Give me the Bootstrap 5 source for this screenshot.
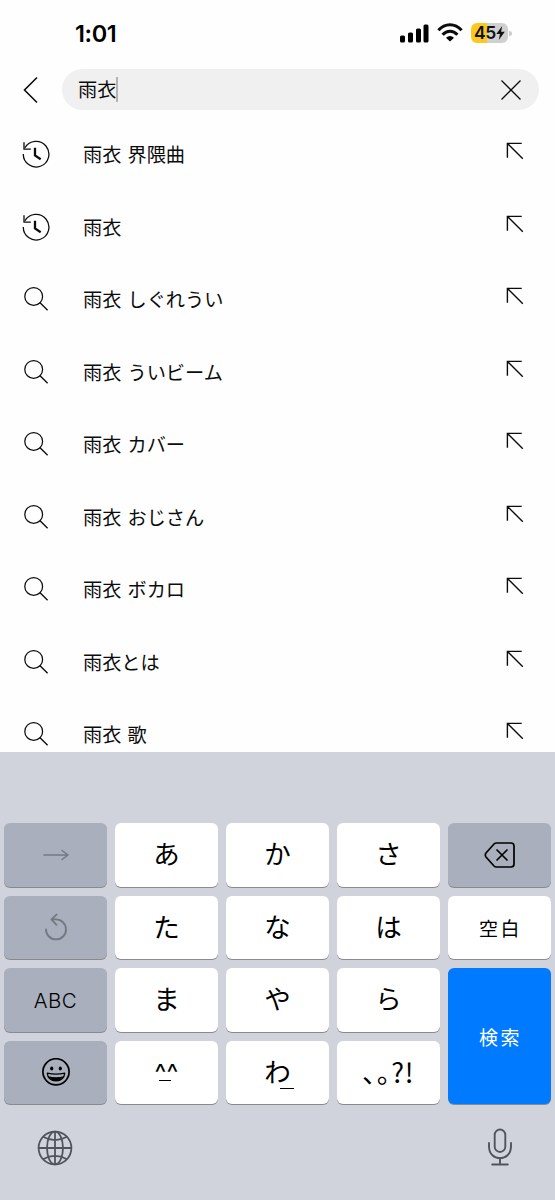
<!DOCTYPE html>
<html lang="ja">
<head>
<meta charset="utf-8">
<meta name="viewport" content="width=device-width, initial-scale=1">
<title>検索</title>
<link href="https://cdn.jsdelivr.net/npm/bootstrap@5.3.0/dist/css/bootstrap.min.css" rel="stylesheet">
<style>
body{font-family:"Noto Sans CJK JP",sans-serif;color:#0c0c0c;background:#fefefe}
svg{display:block;flex:none;fill:none;stroke:currentColor}
.screen{width:555px;height:1200px}
.status{height:69px;padding:0 43px 3px 75px}
.clock{font:600 23.5px/1 Inter,sans-serif;letter-spacing:-.4px;color:#000;padding-top:2px}
.battery{width:37px;height:20px;border-radius:6px;background:linear-gradient(90deg,#fbc91d 16.5px,#d0d0d1 16.5px);font:600 17.5px/20px Inter,sans-serif;letter-spacing:-.3px;color:#111;padding-left:3px}
.battery-tip{width:3px;height:5px;border-radius:0 3px 3px 0;background:#ccc;margin-left:1px}
.search-row{height:41px;padding:0 16px 0 22px}
.field{height:41px;margin-left:22px;padding:0 16px;background:#f0f0f0;font-size:19.2px}
.caret{width:2px;height:25px;background:#b4b4b4}
.suggestions{height:641.5px;padding-top:8.25px}
.suggestion{height:72.5px;padding:0 31px 0 22px;font-size:19.2px;word-spacing:1.8px}
.suggestion svg:first-child{margin:0 33px 1px 0}
.suggestion svg:last-child{margin-bottom:7px}
.keyboard{height:448.5px;background:#d0d3db;padding:71.5px 4px 0;color:#000}
.keys{display:grid;grid-template-columns:repeat(5,103px);grid-auto-rows:63.6px;gap:9px 8px}
.key{background:#fff;border-radius:6px;box-shadow:0 1px 0 #898a8e;font-size:26.5px;line-height:1;padding-bottom:3px}
.key-dark{background:#a9afbc;padding:0}
.key-text{font-size:19px;letter-spacing:2.6px;padding:0 0 0 2px}
.key-go{background:#007aff;color:#fff;grid-column:5;grid-row:3/span 2}
.key-abc{font:300 20.5px/1 Inter,sans-serif;letter-spacing:.5px;padding-top:2px}
.dim{color:#747982}
.key-bar{padding:24px 37px 0 33px;color:#50545c}
.face{font:25px/1 Inter,sans-serif;padding-top:5px;letter-spacing:.3px}
.under{position:absolute;height:1.7px;background:#000}
.under-face{left:44px;top:39px;width:12px}
.under-wa{left:54px;top:47px;width:14px}
.punct{font-size:27px;letter-spacing:.7px}
</style>
</head>
<body>
<svg width="0" height="0" class="position-absolute">
<symbol id="history" viewBox="0 0 28 28"><path d="M1.3 14A12.8 12.8 0 1 0 3 7.8" stroke-width="1.3"/><path d="M2 2.3V9.2H8.8" stroke-width="1.3"/><path d="M13 7.7V15.5L18.7 19.2" stroke-width="2.3"/></symbol>
<symbol id="search" viewBox="0 0 28 28"><circle cx="11.7" cy="11.4" r="8.9" stroke-width="1.25"/><path d="M17.8 17.5 25.6 25.2" stroke-width="1.35"/></symbol>
<symbol id="fill" viewBox="0 0 18 18"><path d="M15.7 1.4H1.4V15.7M1.4 1.4 16.8 16.8" stroke-width="1.4"/></symbol>
</svg>
<main class="screen d-flex flex-column overflow-hidden">
<header class="status d-flex align-items-center">
<div class="clock">1:01</div>
<svg class="ms-auto" width="30" height="20" viewBox="0 0 30 20" style="stroke:none;fill:#000"><rect x="1" y="12.5" width="5" height="7" rx="1.5"/><rect x="9" y="9.5" width="5" height="10" rx="1.5"/><rect x="17" y="5.5" width="5" height="14" rx="1.5"/><rect x="24.5" y="1.5" width="5" height="18" rx="1.5"/></svg>
<svg class="ms-2" width="26" height="20" viewBox="0 0 26 20" stroke-width="3.1"><path d="M1.4 7.3C8-.2 18-.2 24.6 7.3M5.6 11.7C10 7 16 7 20.4 11.7"/><path d="M13 18.6 9 14.7Q13 11.5 17 14.7Z" fill="#000" stroke="none"/></svg>
<div class="battery d-flex align-items-center ms-2"><span>45</span><svg width="9" height="14" viewBox="0 0 9 14"><path d="M6.2 0 .3 8H4L2.8 14 8.8 5.8H5.1Z" fill="#111" stroke="none"/></svg></div><div class="battery-tip"></div>
</header>
<div class="search-row d-flex align-items-center">
<svg width="18" height="28" viewBox="0 0 18 28" stroke-width="1.6"><path d="M15 1.5 2.5 14 15 26.5"/></svg>
<div class="field rounded-pill flex-grow-1 d-flex align-items-center"><span>雨衣</span><i class="caret"></i><svg class="ms-auto" width="24" height="24" viewBox="0 0 24 24" stroke-width="1.3"><path d="M2.5 2.5 21.5 21.5M21.5 2.5 2.5 21.5"/></svg></div>
</div>
<section class="suggestions overflow-hidden flex-shrink-0">
<div class="suggestion d-flex align-items-center"><svg width="28" height="28"><use href="#history"/></svg><span>雨衣 界隈曲</span><svg class="ms-auto" width="18" height="18"><use href="#fill"/></svg></div>
<div class="suggestion d-flex align-items-center"><svg width="28" height="28"><use href="#history"/></svg><span>雨衣</span><svg class="ms-auto" width="18" height="18"><use href="#fill"/></svg></div>
<div class="suggestion d-flex align-items-center"><svg width="28" height="28"><use href="#search"/></svg><span>雨衣 しぐれうい</span><svg class="ms-auto" width="18" height="18"><use href="#fill"/></svg></div>
<div class="suggestion d-flex align-items-center"><svg width="28" height="28"><use href="#search"/></svg><span>雨衣 ういビーム</span><svg class="ms-auto" width="18" height="18"><use href="#fill"/></svg></div>
<div class="suggestion d-flex align-items-center"><svg width="28" height="28"><use href="#search"/></svg><span>雨衣 カバー</span><svg class="ms-auto" width="18" height="18"><use href="#fill"/></svg></div>
<div class="suggestion d-flex align-items-center"><svg width="28" height="28"><use href="#search"/></svg><span>雨衣 おじさん</span><svg class="ms-auto" width="18" height="18"><use href="#fill"/></svg></div>
<div class="suggestion d-flex align-items-center"><svg width="28" height="28"><use href="#search"/></svg><span>雨衣 ボカロ</span><svg class="ms-auto" width="18" height="18"><use href="#fill"/></svg></div>
<div class="suggestion d-flex align-items-center"><svg width="28" height="28"><use href="#search"/></svg><span>雨衣とは</span><svg class="ms-auto" width="18" height="18"><use href="#fill"/></svg></div>
<div class="suggestion d-flex align-items-center"><svg width="28" height="28"><use href="#search"/></svg><span>雨衣 歌</span><svg class="ms-auto" width="18" height="18"><use href="#fill"/></svg></div>
</section>
<section class="keyboard flex-shrink-0">
<div class="keys">
<div class="key key-dark dim d-flex align-items-center justify-content-center"><svg width="28" height="14" viewBox="0 0 28 14" stroke-width="1.5" stroke-linecap="round" stroke-linejoin="round"><path d="M2 7H26M20 2.5 26 7 20 11.5"/></svg></div>
<div class="key d-flex align-items-center justify-content-center">あ</div>
<div class="key d-flex align-items-center justify-content-center">か</div>
<div class="key d-flex align-items-center justify-content-center">さ</div>
<div class="key key-dark d-flex align-items-center justify-content-center"><svg width="32" height="28" viewBox="0 0 32 28" stroke-width="1.7" stroke-linecap="round" stroke-linejoin="round"><path d="M12.5 2H27Q30 2 30 5V23Q30 26 27 26H12.5Q11 26 10 25L2 16Q.6 14 2 12L10 3Q11 2 12.5 2ZM13 9 23 19M23 9 13 19"/></svg></div>
<div class="key key-dark dim d-flex align-items-center justify-content-center"><svg width="26" height="28" viewBox="0 0 26 28" stroke-width="1.9" stroke-linecap="round" stroke-linejoin="round"><path d="M3 16.4A10 10 0 1 0 13 6.4H8.5M13.5 1.6 8.5 6.4 13.5 11.8"/></svg></div>
<div class="key d-flex align-items-center justify-content-center">た</div>
<div class="key d-flex align-items-center justify-content-center">な</div>
<div class="key d-flex align-items-center justify-content-center">は</div>
<div class="key key-text d-flex align-items-center justify-content-center">空白</div>
<div class="key key-dark key-abc d-flex align-items-center justify-content-center">ABC</div>
<div class="key d-flex align-items-center justify-content-center">ま</div>
<div class="key d-flex align-items-center justify-content-center">や</div>
<div class="key d-flex align-items-center justify-content-center">ら</div>
<div class="key key-text key-go d-flex align-items-center justify-content-center">検索</div>
<div class="key key-dark d-flex align-items-center justify-content-center"><svg width="30" height="30" viewBox="0 0 30 30" stroke-width="1.7"><circle cx="15" cy="13.8" r="13.1"/><ellipse cx="10.7" cy="10.5" rx="1.6" ry="2" fill="#000" stroke="none"/><ellipse cx="19.3" cy="10.5" rx="1.6" ry="2" fill="#000" stroke="none"/><path d="M6.3 15.2Q15 17 23.7 15.2Q23 22.8 15 22.8T6.3 15.2Z" stroke-width="1.3" stroke-linejoin="round"/><path d="M7.3 18.3Q15 20.3 22.7 18.3Q20.5 22.8 15 22.8T7.3 18.3Z" fill="#000" stroke="none"/></svg></div>
<div class="key d-flex align-items-center justify-content-center position-relative"><span class="face">^^</span><i class="under under-face"></i></div>
<div class="key d-flex align-items-center justify-content-center position-relative">わ<i class="under under-wa"></i></div>
<div class="key d-flex align-items-center justify-content-center"><span class="punct">､｡?!</span></div>
</div>
<div class="key-bar d-flex justify-content-between">
<svg width="36" height="40" viewBox="0 0 36 40" stroke-width="1.8"><circle cx="18" cy="20" r="16.4"/><ellipse cx="18" cy="20" rx="8" ry="16.4"/><path d="M18 3.6V36.4M1.6 20H34.4M6 8.8Q18 15.5 30 8.8M6 31.2Q18 24.5 30 31.2"/></svg>
<svg width="28" height="40" viewBox="0 0 28 40" stroke-width="1.9" stroke-linecap="round"><rect x="8.7" y="1.5" width="10.6" height="22.5" rx="5.3"/><path d="M3 15V18.5C3 34 25 34 25 18.5V15M14 30V36.5M6.2 36.5H21.8"/></svg>
</div>
</section>
</main>
</body>
</html>
